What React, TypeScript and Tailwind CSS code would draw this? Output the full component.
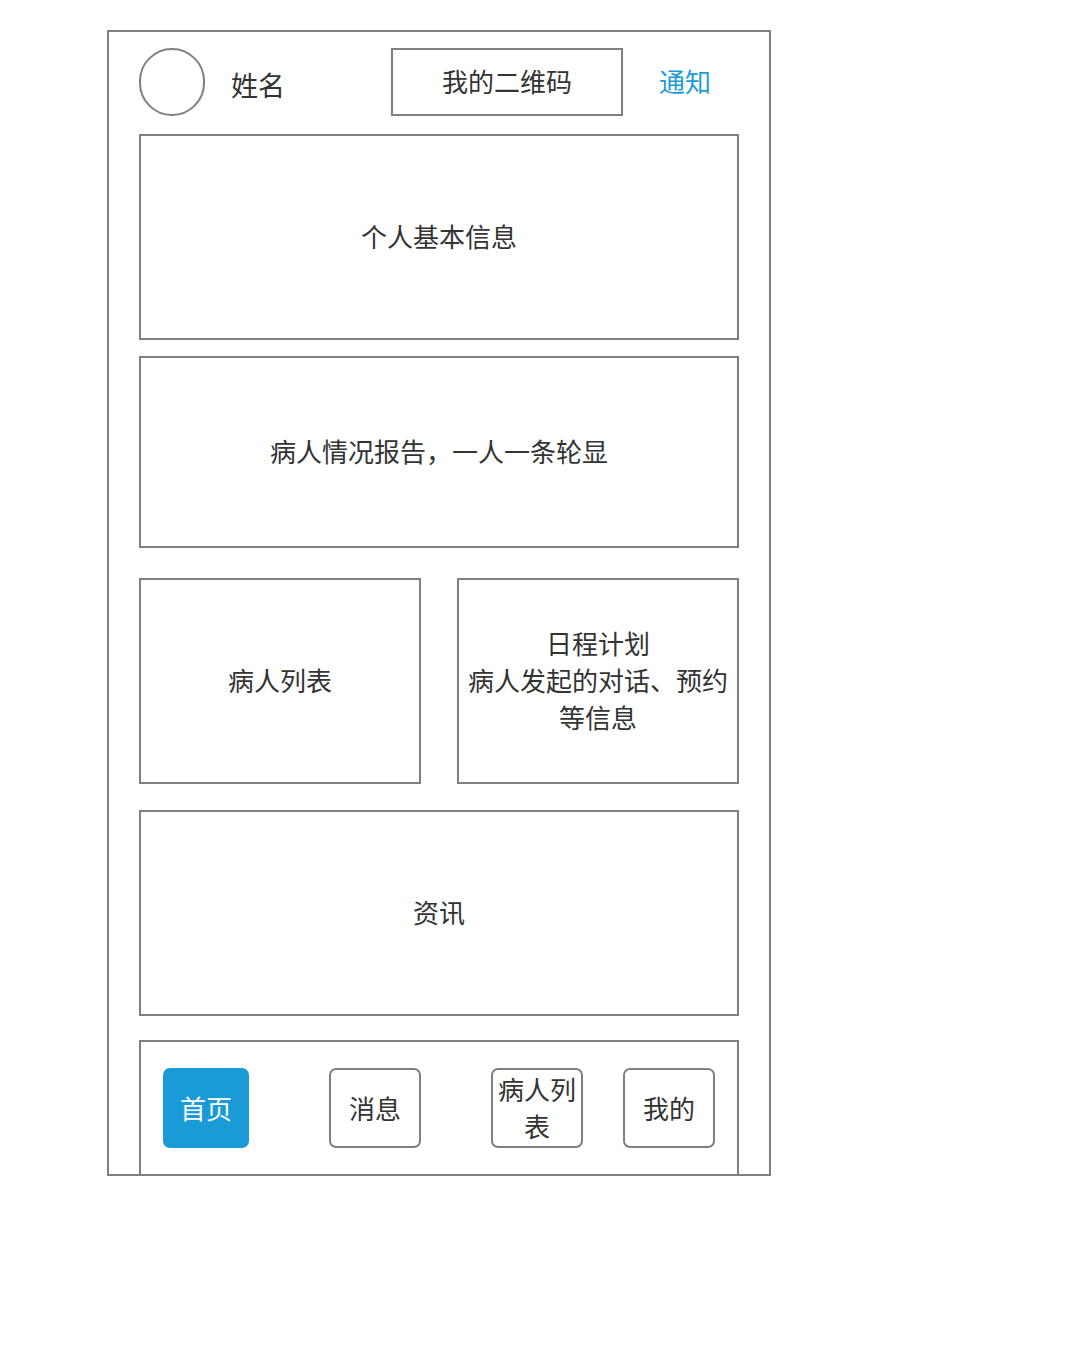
import React from "react";

const font = "font-['Noto_Sans_CJK_SC','Noto_Sans',sans-serif]";

const Box = ({ className = "", children }: { className?: string; children: React.ReactNode }) => (
  <div
    className={`border-2 border-[#808080] flex items-center justify-center text-center text-[26px] leading-[37px] text-[#333333] pb-[4px] ${className}`}
  >
    {children}
  </div>
);

const NavButton = ({ label, active = false, className = "" }: { label: React.ReactNode; active?: boolean; className?: string }) => (
  <div
    className={`h-[80px] rounded-[7px] flex items-center justify-center text-center text-[26px] leading-[37px] pb-[2px] ${
      active ? "bg-[#1a9bd7] text-white" : "border-2 border-[#808080] text-[#333333]"
    } ${className}`}
  >
    {label}
  </div>
);

export default function App() {
  return (
    <div className={`w-[1074px] h-[1364px] bg-white ${font}`}>
      <div className="ml-[107px] mt-[30px] w-[664px] h-[1146px] border-2 border-[#808080] overflow-hidden px-[30px] pt-[16px]">
        {/* header */}
        <div className="flex items-center h-[68px]">
          <div className="w-[66px] h-[68px] rounded-full border-2 border-[#808080]" />
          <span className="ml-[26px] text-[27px] text-[#333333] mt-[6px]">姓名</span>
          <div className="ml-auto w-[232px] h-[68px] border-2 border-[#808080] flex items-center justify-center text-[26px] text-[#333333] pb-[4px]">
            我的二维码
          </div>
          <span className="ml-[36px] mr-[28px] text-[26px] text-[#1a9bd7] -mt-[4px]">通知</span>
        </div>

        <Box className="mt-[18px] h-[206px]">个人基本信息</Box>
        <Box className="mt-[16px] h-[192px]">病人情况报告，一人一条轮显</Box>

        <div className="mt-[30px] flex justify-between">
          <Box className="w-[282px] h-[206px]">病人列表</Box>
          <Box className="w-[282px] h-[206px] px-[8px]">
            日程计划
            <br />
            病人发起的对话、预约等信息
          </Box>
        </div>

        <Box className="mt-[26px] h-[206px]">资讯</Box>

        {/* bottom nav */}
        <div className="mt-[24px] h-[160px] border-2 border-[#808080] flex items-start pt-[26px] pl-[22px]">
          <NavButton label="首页" active className="w-[86px]" />
          <NavButton label="消息" className="w-[92px] ml-[80px]" />
          <NavButton label="病人列表" className="w-[92px] ml-[70px] px-[2px]" />
          <NavButton label="我的" className="w-[92px] ml-[40px]" />
        </div>
      </div>
    </div>
  );
}
